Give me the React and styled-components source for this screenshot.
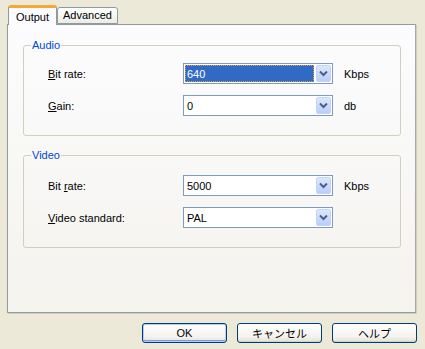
import styled, { createGlobalStyle } from 'styled-components'

const GlobalStyle = createGlobalStyle`
  html, body {
    margin: 0;
    padding: 0;
    background: #ece9d8;
  }
  body {
    font-family: Tahoma, "Liberation Sans", "Noto Sans CJK JP", sans-serif;
    font-size: 11px;
    color: #000;
  }
`;

const Window = styled.div`
  width: 425px;
  height: 349px;
  background: #ece9d8;
  box-sizing: border-box;
  padding: 5px 0 0 7px;
  display: flex;
  flex-direction: column;
`;

const TabRow = styled.div`
  display: flex;
  align-items: flex-end;
  height: 19px;
  margin-left: 1px;
  position: relative;
  z-index: 1;
`;

const Tab = styled.div`
  box-sizing: border-box;
  height: ${p => (p.$active ? '20px' : '17px')};
  margin-bottom: ${p => (p.$active ? '-1px' : '0')};
  padding: ${p => (p.$active ? '3px 7px 0 7px' : '1px 5px 0 5px')};
  border: 1px solid #919b9c;
  border-bottom: ${p => (p.$active ? 'none' : '1px solid #919b9c')};
  border-top: ${p => (p.$active ? '3px solid #f5a836' : '1px solid #919b9c')};
  border-radius: 3px 3px 0 0;
  background: ${p => (p.$active ? '#fcfcfe' : 'linear-gradient(#ffffff, #ecebe6)')};
  line-height: 13px;
`;

const Panel = styled.div`
  width: 409px;
  height: 289px;
  box-sizing: border-box;
  border: 1px solid #919b9c;
  border-right-color: #a3a9ad;
  box-shadow: 1px 1px 0 #d0cec3;
  background: linear-gradient(#fcfcfe, #f4f3ee);
  padding: 14px 14px 0 15px;
  display: flex;
  flex-direction: column;
  gap: 13px;
`;

const Group = styled.fieldset`
  margin: 0;
  border: 1px solid #d0d0bf;
  border-radius: 3px;
  padding: ${p => p.$top}px 0 19px 24px;
  display: flex;
  flex-direction: column;
  gap: 11px;
`;

const Legend = styled.legend`
  color: #0046d5;
  padding: 0 1px;
  margin-left: -17px;
  line-height: 13px;
`;

const Row = styled.div`
  display: flex;
  align-items: center;
  height: 21px;
`;

const Label = styled.span`
  width: 135px;
`;

const Combo = styled.div`
  box-sizing: border-box;
  width: 150px;
  height: 21px;
  border: 1px solid #7f9db9;
  background: #fff;
  display: flex;
  align-items: stretch;
  padding: 1px;
`;

const ComboText = styled.div`
  flex: 1;
  display: flex;
  align-items: center;
  padding-left: 2px;
  margin-right: 2px;
  background: ${p => (p.$selected ? '#316ac5' : 'transparent')};
  color: ${p => (p.$selected ? '#fff' : '#000')};
  outline: ${p => (p.$selected ? '1px dotted #e0a040' : 'none')};
  outline-offset: -1px;
`;

const DropButton = styled.div`
  width: 15px;
  box-sizing: border-box;
  border: 1px solid #c3d3fd;
  border-radius: 2px;
  background: linear-gradient(#dbe7fe, #b9cdf8);
  display: flex;
  align-items: center;
  justify-content: center;
`;

const Unit = styled.span`
  margin-left: 11px;
`;

const ButtonRow = styled.div`
  display: flex;
  justify-content: flex-end;
  gap: 10px;
  width: 410px;
  margin-top: 10px;
`;

const Button = styled.div`
  box-sizing: border-box;
  width: 85px;
  height: 20px;
  border: 1px solid #003c74;
  border-radius: 3px;
  background: linear-gradient(#ffffff 0%, #f4f3ee 70%, #e3e1d7 100%);
  box-shadow: ${p => (p.$default ? 'inset 0 0 0 1px #b6cdf6, inset 0 -1px 0 1px #7b9ce0' : 'inset 0 -1px 0 #d6d0c5')};
  display: flex;
  align-items: center;
  justify-content: center;
`;

const Chevron = () => (
  <svg width="9" height="7" viewBox="0 0 9 7">
    <path d="M1 1.5 L4.5 5 L8 1.5" fill="none" stroke="#4d6185" strokeWidth="2" />
  </svg>
);

const Key = styled.span`
  text-decoration: underline;
`;

const Field = ({ label, value, unit, selected }) => (
  <Row>
    <Label>{label}</Label>
    <Combo>
      <ComboText $selected={selected}>{value}</ComboText>
      <DropButton><Chevron /></DropButton>
    </Combo>
    {unit && <Unit>{unit}</Unit>}
  </Row>
);

export default function App() {
  return (
    <Window>
      <GlobalStyle />
      <TabRow>
        <Tab $active>Output</Tab>
        <Tab>Advanced</Tab>
      </TabRow>
      <Panel>
        <Group $top={11}>
          <Legend>Audio</Legend>
          <Field label={<><Key>B</Key>it rate:</>} value="640" unit="Kbps" selected />
          <Field label={<><Key>G</Key>ain:</>} value="0" unit="db" />
        </Group>
        <Group $top={13}>
          <Legend>Video</Legend>
          <Field label={<>Bit <Key>r</Key>ate:</>} value="5000" unit="Kbps" />
          <Field label={<><Key>V</Key>ideo standard:</>} value="PAL" />
        </Group>
      </Panel>
      <ButtonRow>
        <Button $default>OK</Button>
        <Button>キャンセル</Button>
        <Button>ヘルプ</Button>
      </ButtonRow>
    </Window>
  )
}
